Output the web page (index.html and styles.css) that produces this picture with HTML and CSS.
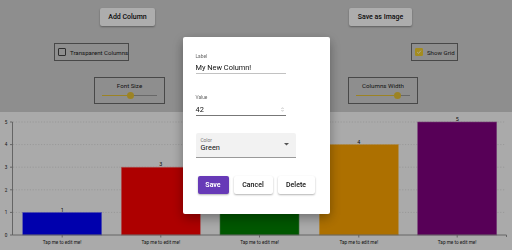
FILE: index.html
```html
<!DOCTYPE html>
<html>
<head>
<meta charset="utf-8">
<link rel="stylesheet" href="styles.css">
</head>
<body>
<div class="page">
  <div class="controls">
    <div class="row row-buttons">
      <button class="btn btn-add">Add Column</button>
      <button class="btn btn-save">Save as Image</button>
    </div>
    <div class="row row-checks">
      <label class="opt opt-transparent"><span class="cb"></span><span>Transparent Columns</span></label>
      <label class="opt opt-grid"><span class="cb cb-on"><svg viewBox="0 0 10 10" width="8" height="8"><path d="M2 5.2 L4.2 7.3 L8.2 2.8" fill="none" stroke="#ffffff" stroke-width="1.4"/></svg></span><span>Show Grid</span></label>
    </div>
    <div class="row row-sliders">
      <div class="slider-box sb-font">
        <div class="slider-title">Font Size</div>
        <div class="slider"><div class="track"><div class="track-on" style="width:51%"></div><div class="thumb" style="left:51%"></div></div></div>
      </div>
      <div class="slider-box sb-width">
        <div class="slider-title">Columns Width</div>
        <div class="slider"><div class="track"><div class="track-on" style="width:77%"></div><div class="thumb" style="left:77%"></div></div></div>
      </div>
    </div>
  </div>
  <div class="chart">
    <svg class="chart-svg" viewBox="0 0 512 138" width="512" height="138">
      <g class="grid" stroke="#cfcfcf" stroke-width="0.6" stroke-dasharray="1.2 1.6">
        <line x1="13" y1="10" x2="505" y2="10"/>
        <line x1="13" y1="32.6" x2="505" y2="32.6"/>
        <line x1="13" y1="55.2" x2="505" y2="55.2"/>
        <line x1="13" y1="77.8" x2="505" y2="77.8"/>
        <line x1="13" y1="100.4" x2="505" y2="100.4"/>
      </g>
      <g class="bars" stroke-width="0.6">
        <rect x="22.7" y="100.4" width="79" height="22.6" fill="#0000ff" stroke="#8080ff"/>
        <rect x="121.3" y="55.2" width="79" height="67.8" fill="#ff0000" stroke="#ff8080"/>
        <rect x="220" y="10" width="79" height="113" fill="#008000" stroke="#60a060"/>
        <rect x="319.3" y="32.6" width="79" height="90.4" fill="#ffa500" stroke="#ffc860"/>
        <rect x="417.7" y="10" width="79" height="113" fill="#800080" stroke="#b060b0"/>
      </g>
      <g class="axis" stroke="#8a8a8a" stroke-width="0.9" fill="none">
        <line x1="12.5" y1="10" x2="12.5" y2="123"/>
        <line x1="12.5" y1="123" x2="506.5" y2="123"/>
        <line x1="506.5" y1="123" x2="506.5" y2="125"/>
        <line x1="10" y1="10" x2="12.5" y2="10"/>
        <line x1="10" y1="32.6" x2="12.5" y2="32.6"/>
        <line x1="10" y1="55.2" x2="12.5" y2="55.2"/>
        <line x1="10" y1="77.8" x2="12.5" y2="77.8"/>
        <line x1="10" y1="100.4" x2="12.5" y2="100.4"/>
        <line x1="10" y1="123" x2="12.5" y2="123"/>
        <line x1="62.2" y1="123" x2="62.2" y2="125.5"/>
        <line x1="160.8" y1="123" x2="160.8" y2="125.5"/>
        <line x1="259.5" y1="123" x2="259.5" y2="125.5"/>
        <line x1="358.8" y1="123" x2="358.8" y2="125.5"/>
        <line x1="457.2" y1="123" x2="457.2" y2="125.5"/>
      </g>
      <g class="ylabels" font-size="4.6" fill="#222" text-anchor="middle">
        <text x="6" y="11.7">5</text>
        <text x="6" y="34.3">4</text>
        <text x="6" y="56.9">3</text>
        <text x="6" y="79.5">2</text>
        <text x="6" y="102.1">1</text>
        <text x="6" y="124.7">0</text>
      </g>
      <g class="vlabels" font-size="5.4" fill="#111" text-anchor="middle">
        <text x="62.2" y="99.6">1</text>
        <text x="160.8" y="54.4">3</text>
        <text x="259.5" y="9.2">5</text>
        <text x="358.8" y="31.8">4</text>
        <text x="457.2" y="9.2">5</text>
      </g>
      <g class="xlabels" font-size="4.7" fill="#222" text-anchor="middle">
        <text x="62.2" y="131.5">Tap me to edit me!</text>
        <text x="160.8" y="131.5">Tap me to edit me!</text>
        <text x="259.5" y="131.5">Tap me to edit me!</text>
        <text x="358.8" y="131.5">Tap me to edit me!</text>
        <text x="457.2" y="131.5">Tap me to edit me!</text>
      </g>
    </svg>
  </div>
</div>
<div class="scrim">
  <div class="dialog">
    <div class="field field-label">
      <div class="field-caption">Label</div>
      <div class="field-input">My New Column!</div>
    </div>
    <div class="field field-value">
      <div class="field-caption">Value</div>
      <div class="field-input field-number"><span>42</span><span class="spin"><svg viewBox="0 0 4 7" width="3" height="5"><path d="M0.6 2.6 L2 1 L3.4 2.6 M0.6 4.4 L2 6 L3.4 4.4" fill="none" stroke="#777" stroke-width="0.6"/></svg></span></div>
    </div>
    <div class="select">
      <div class="select-text">
        <div class="select-caption">Color</div>
        <div class="select-value">Green</div>
      </div>
      <svg class="caret" viewBox="0 0 6 3" width="5" height="2.5"><path d="M0 0 L6 0 L3 3 Z" fill="#555"/></svg>
    </div>
    <div class="actions">
      <button class="dbtn dbtn-save">Save</button>
      <button class="dbtn dbtn-cancel">Cancel</button>
      <button class="dbtn dbtn-delete">Delete</button>
    </div>
  </div>
</div>
</body>
</html>
```
FILE: styles.css
```css
* { box-sizing: border-box; }
html, body { margin: 0; padding: 0; }
body {
  width: 512px;
  height: 250px;
  overflow: hidden;
  font-family: Roboto, "Liberation Sans", sans-serif;
  background: #d2d2d2;
  color: #111;
}
.page { width: 512px; height: 250px; display: flex; flex-direction: column; }
.controls { height: 112px; display: flex; flex-direction: column; }
.row { display: flex; justify-content: space-between; align-items: center; }
.row-buttons { margin-top: 8px; height: 18px; padding: 0 100px; }
.row-checks { margin-top: 17px; height: 18px; padding: 0 54px; }
.row-sliders { margin-top: 16px; height: 27px; padding: 0 94px; }

.btn {
  height: 18px;
  border: none;
  border-radius: 2px;
  background: #ffffff;
  font-family: Roboto, "Liberation Sans", sans-serif;
  font-size: 7px;
  font-weight: 500;
  color: #111;
  padding: 0;
  box-shadow: 0 1px 2px rgba(0,0,0,0.35);
}
.btn-add { width: 55px; }
.btn-save { width: 63px; }

.opt {
  height: 18px;
  border: 1px solid #6a6a6a;
  display: flex;
  align-items: center;
  font-size: 6.1px;
  color: #1a1a1a;
  white-space: nowrap;
}
.opt-transparent { width: 75px; padding-left: 3px; }
.opt-grid { width: 47px; padding-left: 3px; }
.cb {
  flex: none;
  width: 8px; height: 8px;
  border: 1px solid #444;
  border-radius: 1px;
  margin-right: 4px;
  display: flex; align-items: center; justify-content: center;
}
.cb-on { background: #f2cf2e; border-color: #f2cf2e; }

.slider-box {
  height: 27px;
  border: 1px solid #6a6a6a;
  display: flex;
  flex-direction: column;
  align-items: center;
}
.sb-font { width: 71px; }
.sb-width { width: 70px; }
.slider-title { font-size: 6.2px; margin-top: 4.5px; line-height: 7px; color: #1a1a1a; white-space: nowrap; }
.slider { width: 100%; padding: 0 7px; margin-top: 5px; }
.track { position: relative; height: 1px; background: #9a9a9a; }
.track-on { height: 1px; background: #e6c235; }
.thumb {
  position: absolute;
  top: -3px;
  width: 7px; height: 7px;
  margin-left: -3.5px;
  border-radius: 50%;
  background: #e6c235;
}

.chart { height: 138px; background: #fbfbfb; }
.chart-svg { display: block; font-family: Roboto, "Liberation Sans", sans-serif; }

.scrim {
  position: fixed;
  inset: 0;
  background: rgba(0,0,0,0.32);
  display: flex;
  align-items: center;
  justify-content: center;
}
.dialog {
  width: 147px;
  height: 177px;
  background: #ffffff;
  border-radius: 2px;
  box-shadow: 0 4px 12px rgba(0,0,0,0.35);
  padding: 17px 13px 0 13px;
  display: flex;
  flex-direction: column;
}
.field { width: 90px; }
.field-caption { font-size: 4.8px; color: #666; line-height: 6px; }
.field-input {
  font-size: 7.4px;
  line-height: 9px;
  margin-top: 3px;
  padding-bottom: 1.5px;
  border-bottom: 1px solid #c2c2c2;
  color: #111;
}
.field-value { margin-top: 21px; }
.field-value .field-input { margin-top: 3.5px; }
.field-number { display: flex; justify-content: space-between; align-items: center; border-bottom-color: #777; }
.spin { display: flex; margin-right: 2px; }

.select {
  margin-top: 16.5px;
  width: 100px;
  height: 25px;
  background: #f2f2f2;
  border-bottom: 1.5px solid #9a9a9a;
  border-radius: 2px 2px 0 0;
  display: flex;
  align-items: center;
  justify-content: space-between;
  padding: 0 7px 0 5px;
}
.select-caption { font-size: 4.8px; color: #777; line-height: 6px; }
.select-value { font-size: 7.4px; line-height: 8px; color: #111; }
.caret { display: block; }

.actions { margin-top: 18px; display: flex; gap: 5px; padding-left: 2px; }
.dbtn {
  height: 18px;
  border: none;
  border-radius: 2px;
  font-family: Roboto, "Liberation Sans", sans-serif;
  font-size: 7px;
  font-weight: 500;
  padding: 0;
  background: #ffffff;
  color: #111;
  box-shadow: 0 1px 2px rgba(0,0,0,0.3);
}
.dbtn-save { width: 31px; background: #673ab7; color: #ffffff; font-weight: 700; }
.dbtn-cancel { width: 39px; }
.dbtn-delete { width: 37px; }
```
